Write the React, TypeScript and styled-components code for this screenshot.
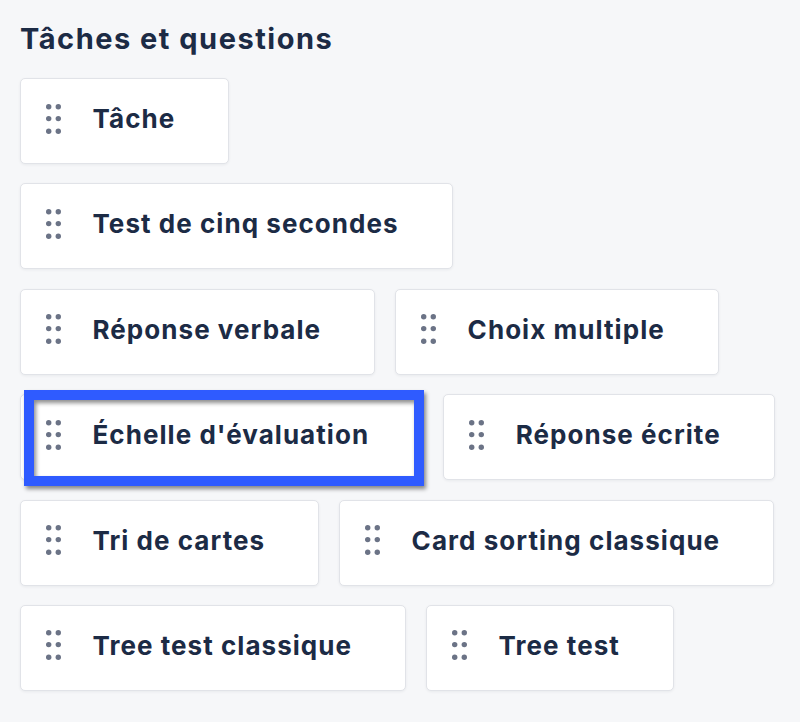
import styled, { createGlobalStyle } from "styled-components";

const GlobalStyle = createGlobalStyle`
  html, body {
    margin: 0;
    padding: 0;
    background: #f6f7f9;
  }
  body {
    font-family: "Inter", "Liberation Sans", sans-serif;
    color: #1c2b45;
  }
`;

const rows: { label: string; dragging?: boolean }[][] = [
  [{ label: "Tâche" }],
  [{ label: "Test de cinq secondes" }],
  [{ label: "Réponse verbale" }, { label: "Choix multiple" }],
  [{ label: "Échelle d'évaluation", dragging: true }, { label: "Réponse écrite" }],
  [{ label: "Tri de cartes" }, { label: "Card sorting classique" }],
  [{ label: "Tree test classique" }, { label: "Tree test" }],
];

const Handle = () => (
  <svg width="15" height="30" viewBox="0 0 15 30" aria-hidden="true">
    {[2.7, 14.6, 27.2].map((cy) =>
      [2.7, 12.3].map((cx) => (
        <circle key={`${cx}-${cy}`} cx={cx} cy={cy} r="2.7" fill="#6b7386" />
      ))
    )}
  </svg>
);

export default function App() {
  return (
    <>
      <GlobalStyle />
      <Panel>
        <Heading>Tâches et questions</Heading>
        <List>
          {rows.map((row, i) => (
            <Row key={i}>
              {row.map((it) => (
                <Card key={it.label}>
                  <HandleWrap>
                    <Handle />
                  </HandleWrap>
                  <Label>{it.label}</Label>
                  {it.dragging && <DragRing />}
                </Card>
              ))}
            </Row>
          ))}
        </List>
      </Panel>
    </>
  );
}

const Panel = styled.div`
  padding: 20px 20px 0 20px;
  height: 722px;
  box-sizing: border-box;
`;

const Heading = styled.h2`
  margin: 0 0 20px 0;
  font-size: 29px;
  line-height: 38px;
  font-weight: 700;
  letter-spacing: 1.5px;
  color: #1c2b45;
`;

const List = styled.div`
  display: flex;
  flex-direction: column;
  gap: 19.4px;
`;

const Row = styled.div`
  display: flex;
  gap: 20px;
`;

const Card = styled.div`
  position: relative;
  display: flex;
  align-items: center;
  height: 86px;
  box-sizing: border-box;
  padding: 0 53px 0 25px;
  background: #ffffff;
  border: 1.5px solid #e1e3e8;
  border-radius: 5px;
  box-shadow: 0 1px 3px rgba(20, 30, 50, 0.06);
`;

const HandleWrap = styled.span`
  display: flex;
  margin-top: -5px;
  margin-right: 31.5px;
`;

const Label = styled.span`
  margin-bottom: 4px;
  font-size: 26px;
  font-weight: 700;
  line-height: 1;
  letter-spacing: 1.05px;
  white-space: nowrap;
  color: #1c2b45;
`;

const DragRing = styled.div`
  position: absolute;
  left: 3px;
  top: -5.5px;
  right: -2px;
  bottom: -7px;
  border: 10px solid #2f5bff;
  box-shadow:
    inset 2px 3px 4px rgba(0, 0, 0, 0.45),
    2px 3px 4px rgba(0, 0, 0, 0.45);
  pointer-events: none;
`;
